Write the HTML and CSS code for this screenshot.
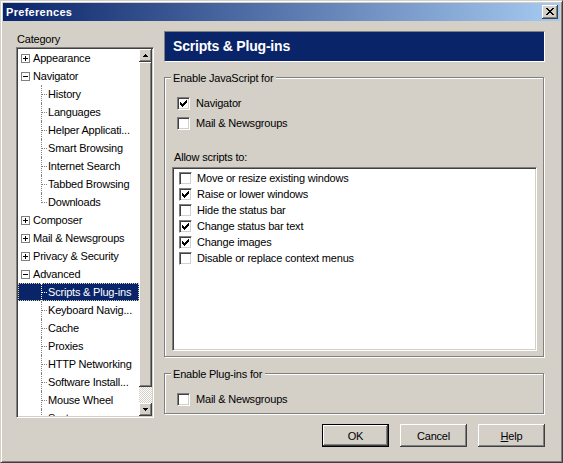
FILE: index.html
```html
<!DOCTYPE html>
<html>
<head>
<meta charset="utf-8">
<title>Preferences</title>
<link rel="stylesheet" href="styles.css">
</head>
<body>
<div class="window">
  <div class="titlebar">
    <span class="title">Preferences</span>
    <span class="close"><svg width="8" height="7" viewBox="0 0 8 7"><path d="M0 0h2v1H0zM6 0h2v1H6zM1 1h2v1H1zM5 1h2v1H5zM2 2h4v1H2zM3 3h2v1H3zM2 4h4v1H2zM1 5h2v1H1zM5 5h2v1H5zM0 6h2v1H0zM6 6h2v1H6z" fill="#000"/></svg></span>
  </div>
  <div class="main">
    <div class="left">
      <div class="cat-label">Category</div>
      <div class="tree">
        <div class="rows">
          <div class="row"><svg class="tog" viewBox="0 0 9 9"><rect x=".5" y=".5" width="8" height="8" fill="#fff" stroke="#808080"/><path d="M2 4.5h5M4.5 2v5" stroke="#000"/></svg><span>Appearance</span></div>
          <div class="row"><svg class="tog" viewBox="0 0 9 9"><rect x=".5" y=".5" width="8" height="8" fill="#fff" stroke="#808080"/><path d="M2 4.5h5" stroke="#000"/></svg><span>Navigator</span></div>
          <div class="row child"><span class="branch"></span><span class="label">History</span></div>
          <div class="row child"><span class="branch"></span><span class="label">Languages</span></div>
          <div class="row child"><span class="branch"></span><span class="label">Helper Applicati...</span></div>
          <div class="row child"><span class="branch"></span><span class="label">Smart Browsing</span></div>
          <div class="row child"><span class="branch"></span><span class="label">Internet Search</span></div>
          <div class="row child"><span class="branch"></span><span class="label">Tabbed Browsing</span></div>
          <div class="row child"><span class="branch last"></span><span class="label">Downloads</span></div>
          <div class="row"><svg class="tog" viewBox="0 0 9 9"><rect x=".5" y=".5" width="8" height="8" fill="#fff" stroke="#808080"/><path d="M2 4.5h5M4.5 2v5" stroke="#000"/></svg><span>Composer</span></div>
          <div class="row"><svg class="tog" viewBox="0 0 9 9"><rect x=".5" y=".5" width="8" height="8" fill="#fff" stroke="#808080"/><path d="M2 4.5h5M4.5 2v5" stroke="#000"/></svg><span>Mail &amp; Newsgroups</span></div>
          <div class="row"><svg class="tog" viewBox="0 0 9 9"><rect x=".5" y=".5" width="8" height="8" fill="#fff" stroke="#808080"/><path d="M2 4.5h5M4.5 2v5" stroke="#000"/></svg><span>Privacy &amp; Security</span></div>
          <div class="row"><svg class="tog" viewBox="0 0 9 9"><rect x=".5" y=".5" width="8" height="8" fill="#fff" stroke="#808080"/><path d="M2 4.5h5" stroke="#000"/></svg><span>Advanced</span></div>
          <div class="row child sel"><span class="branch"></span><span class="label">Scripts &amp; Plug-ins</span></div>
          <div class="row child"><span class="branch"></span><span class="label">Keyboard Navig...</span></div>
          <div class="row child"><span class="branch"></span><span class="label">Cache</span></div>
          <div class="row child"><span class="branch"></span><span class="label">Proxies</span></div>
          <div class="row child"><span class="branch"></span><span class="label">HTTP Networking</span></div>
          <div class="row child"><span class="branch"></span><span class="label">Software Install...</span></div>
          <div class="row child"><span class="branch"></span><span class="label">Mouse Wheel</span></div>
          <div class="row child"><span class="branch"></span><span class="label">System</span></div>
        </div>
        <div class="scrollbar">
          <div class="sb-btn"><svg width="5" height="3" viewBox="0 0 5 3"><path d="M2 0h1v1h1v1h1v1H0V2h1V1h1z" fill="#000"/></svg></div>
          <div class="sb-thumb"></div>
          <div class="sb-track"></div>
          <div class="sb-btn"><svg width="5" height="3" viewBox="0 0 5 3"><path d="M0 0h5v1H4v1H3v1H2V2H1V1H0z" fill="#000"/></svg></div>
        </div>
      </div>
    </div>
    <div class="right">
      <div class="header">Scripts &amp; Plug-ins</div>
      <fieldset class="group">
        <legend>Enable JavaScript for</legend>
        <div class="check-row"><span class="cb"><svg width="9" height="9" viewBox="0 0 9 9"><path transform="translate(1 1)" d="M6 0h1v1H6zM5 1h2v1H5zM0 2h1v1H0zM4 2h3v1H4zM0 3h2v1H0zM3 3h3v1H3zM0 4h5v1H0zM1 5h3v1H1zM2 6h1v1H2z" fill="#000"/></svg></span><span>Navigator</span></div>
        <div class="check-row"><span class="cb"></span><span>Mail &amp; Newsgroups</span></div>
        <div class="allow-label">Allow scripts to:</div>
        <div class="list">
          <div class="list-row"><span class="cb"></span><span>Move or resize existing windows</span></div>
          <div class="list-row"><span class="cb"><svg width="9" height="9" viewBox="0 0 9 9"><path transform="translate(1 1)" d="M6 0h1v1H6zM5 1h2v1H5zM0 2h1v1H0zM4 2h3v1H4zM0 3h2v1H0zM3 3h3v1H3zM0 4h5v1H0zM1 5h3v1H1zM2 6h1v1H2z" fill="#000"/></svg></span><span>Raise or lower windows</span></div>
          <div class="list-row"><span class="cb"></span><span>Hide the status bar</span></div>
          <div class="list-row"><span class="cb"><svg width="9" height="9" viewBox="0 0 9 9"><path transform="translate(1 1)" d="M6 0h1v1H6zM5 1h2v1H5zM0 2h1v1H0zM4 2h3v1H4zM0 3h2v1H0zM3 3h3v1H3zM0 4h5v1H0zM1 5h3v1H1zM2 6h1v1H2z" fill="#000"/></svg></span><span>Change status bar text</span></div>
          <div class="list-row"><span class="cb"><svg width="9" height="9" viewBox="0 0 9 9"><path transform="translate(1 1)" d="M6 0h1v1H6zM5 1h2v1H5zM0 2h1v1H0zM4 2h3v1H4zM0 3h2v1H0zM3 3h3v1H3zM0 4h5v1H0zM1 5h3v1H1zM2 6h1v1H2z" fill="#000"/></svg></span><span>Change images</span></div>
          <div class="list-row"><span class="cb"></span><span>Disable or replace context menus</span></div>
        </div>
      </fieldset>
      <fieldset class="group group2">
        <legend>Enable Plug-ins for</legend>
        <div class="check-row"><span class="cb"></span><span>Mail &amp; Newsgroups</span></div>
      </fieldset>
      <div class="buttons">
        <button class="btn default">OK</button>
        <button class="btn">Cancel</button>
        <button class="btn"><u>H</u>elp</button>
      </div>
    </div>
  </div>
</div>
</body>
</html>
```
FILE: styles.css
```css
html, body {
  margin: 0;
  background: #d4d0c8;
}
body {
  font-family: "Liberation Sans", Arial, sans-serif;
  font-size: 11px;
  letter-spacing: -0.2px;
  color: #000;
}
.window {
  width: 563px;
  height: 463px;
  box-sizing: border-box;
  border: 1px solid;
  border-color: #d4d0c8 #404040 #404040 #d4d0c8;
  box-shadow: inset 1px 1px #fff, inset -1px -1px #808080;
  padding: 2px;
  display: flex;
  flex-direction: column;
}
.titlebar {
  height: 18px;
  flex: none;
  background: linear-gradient(to right, #0a246a, #a6caf0);
  display: flex;
  align-items: center;
  justify-content: space-between;
  padding-left: 3px;
}
.title {
  color: #fff;
  font-weight: bold;
  font-size: 11px;
  letter-spacing: 0.3px;
}
.close {
  width: 16px;
  height: 14px;
  margin-right: 2px;
  background: #d4d0c8;
  box-shadow: inset -1px -1px #404040, inset 1px 1px #fff, inset -2px -2px #808080;
  display: flex;
  align-items: center;
  justify-content: center;
}
.close svg { display: block; margin-top: -1px; }
.main {
  display: flex;
  gap: 10px;
  padding: 10px 15px 0 13px;
}
.left {
  width: 138px;
  flex: none;
}
.cat-label {
  height: 16px;
  box-sizing: border-box;
  padding: 2px 0 0 1px;
  line-height: 13px;
}
.tree {
  height: 371px;
  box-sizing: border-box;
  background: #fff;
  border: 1px solid;
  border-color: #808080 #fff #fff #808080;
  box-shadow: inset 1px 1px #404040, inset -1px -1px #d4d0c8;
  padding: 1px;
  display: flex;
}
.rows {
  flex: 1;
  overflow: hidden;
}
.row {
  height: 18px;
  display: flex;
  align-items: center;
  white-space: nowrap;
  padding-left: 3px;
  line-height: 18px;
}
.tog {
  width: 9px;
  height: 9px;
  flex: none;
  margin-right: 3px;
}
.row.child {
  padding-left: 23px;
  align-items: stretch;
}
.branch {
  width: 6px;
  flex: none;
  box-sizing: border-box;
  border-left: 1px dotted #808080;
}
.branch::before {
  content: "";
  display: block;
  width: 5px;
  height: 10px;
  box-sizing: border-box;
  border-bottom: 1px dotted #808080;
}
.branch.last {
  align-self: flex-start;
  height: 10px;
}
.label {
  padding-left: 1px;
}
.row.sel {
  background: #0a246a;
  color: #fff;
  outline: 1px dotted #d8d8a0;
  outline-offset: -1px;
}
.row.sel .branch,
.row.sel .branch::before {
  border-color: #fff;
}
.scrollbar {
  width: 13px;
  flex: none;
  display: flex;
  flex-direction: column;
}
.sb-btn {
  height: 13px;
  flex: none;
  background: #d4d0c8;
  box-shadow: inset -1px -1px #404040, inset 1px 1px #fff, inset -2px -2px #808080;
  display: flex;
  align-items: center;
  justify-content: center;
}
.sb-btn svg { display: block; }
.sb-thumb {
  height: 325px;
  flex: none;
  background: #d4d0c8;
  box-shadow: inset -1px -1px #404040, inset 1px 1px #fff, inset -2px -2px #808080;
}
.sb-track {
  flex: 1;
  background: repeating-conic-gradient(#fff 0 25%, #d4d0c8 0 50%) 0 0 / 2px 2px;
}
.right {
  width: 381px;
  flex: none;
  display: flex;
  flex-direction: column;
}
.header {
  height: 31px;
  box-sizing: border-box;
  background: #0a246a;
  border: 1px solid;
  border-color: #808080 #fff #fff #808080;
  color: #fff;
  font-weight: bold;
  font-size: 14px;
  display: flex;
  align-items: center;
  padding-left: 8px;
  padding-bottom: 1px;
}
.group {
  margin: 8px 0 0;
  width: 380px;
  min-width: 0;
  box-sizing: border-box;
  border: 1px solid #808080;
  box-shadow: 1px 1px #fff, inset 1px 1px #fff;
  padding: 8px 6px 5px 7px;
}
.group2 {
  margin-top: 9px;
  padding-bottom: 4px;
}
.group legend {
  padding: 2px 3px 0 2px;
  margin-left: -1px;
  line-height: 13px;
  background: #d4d0c8;
}
.check-row {
  height: 20px;
  display: flex;
  align-items: center;
  gap: 6px;
  padding-left: 5px;
}
.cb {
  width: 13px;
  height: 13px;
  flex: none;
  box-sizing: border-box;
  background: #fff;
  border: 1px solid;
  border-color: #808080 #fff #fff #808080;
  box-shadow: inset 1px 1px #404040, inset -1px -1px #d4d0c8;
  padding: 1px;
}
.cb svg { display: block; }
.allow-label {
  margin-top: 18px;
  line-height: 13px;
  padding-left: 2px;
}
.list {
  margin-top: 3px;
  height: 184px;
  box-sizing: border-box;
  background: #fff;
  border: 1px solid;
  border-color: #808080 #fff #fff #808080;
  box-shadow: inset 1px 1px #404040, inset -1px -1px #d4d0c8;
  padding: 2px 1px 1px;
}
.list-row {
  height: 16px;
  display: flex;
  align-items: center;
  gap: 5px;
  padding-left: 5px;
  white-space: nowrap;
}
.buttons {
  display: flex;
  justify-content: flex-end;
  gap: 11px;
  margin-top: 10px;
}
.btn {
  width: 67px;
  height: 23px;
  box-sizing: border-box;
  border: none;
  padding: 0;
  background: #d4d0c8;
  box-shadow: inset -1px -1px #404040, inset 1px 1px #fff, inset -2px -2px #808080, inset 2px 2px #d4d0c8;
  font: inherit;
  letter-spacing: inherit;
  color: #000;
}
.btn.default {
  border: 1px solid #000;
}
```
